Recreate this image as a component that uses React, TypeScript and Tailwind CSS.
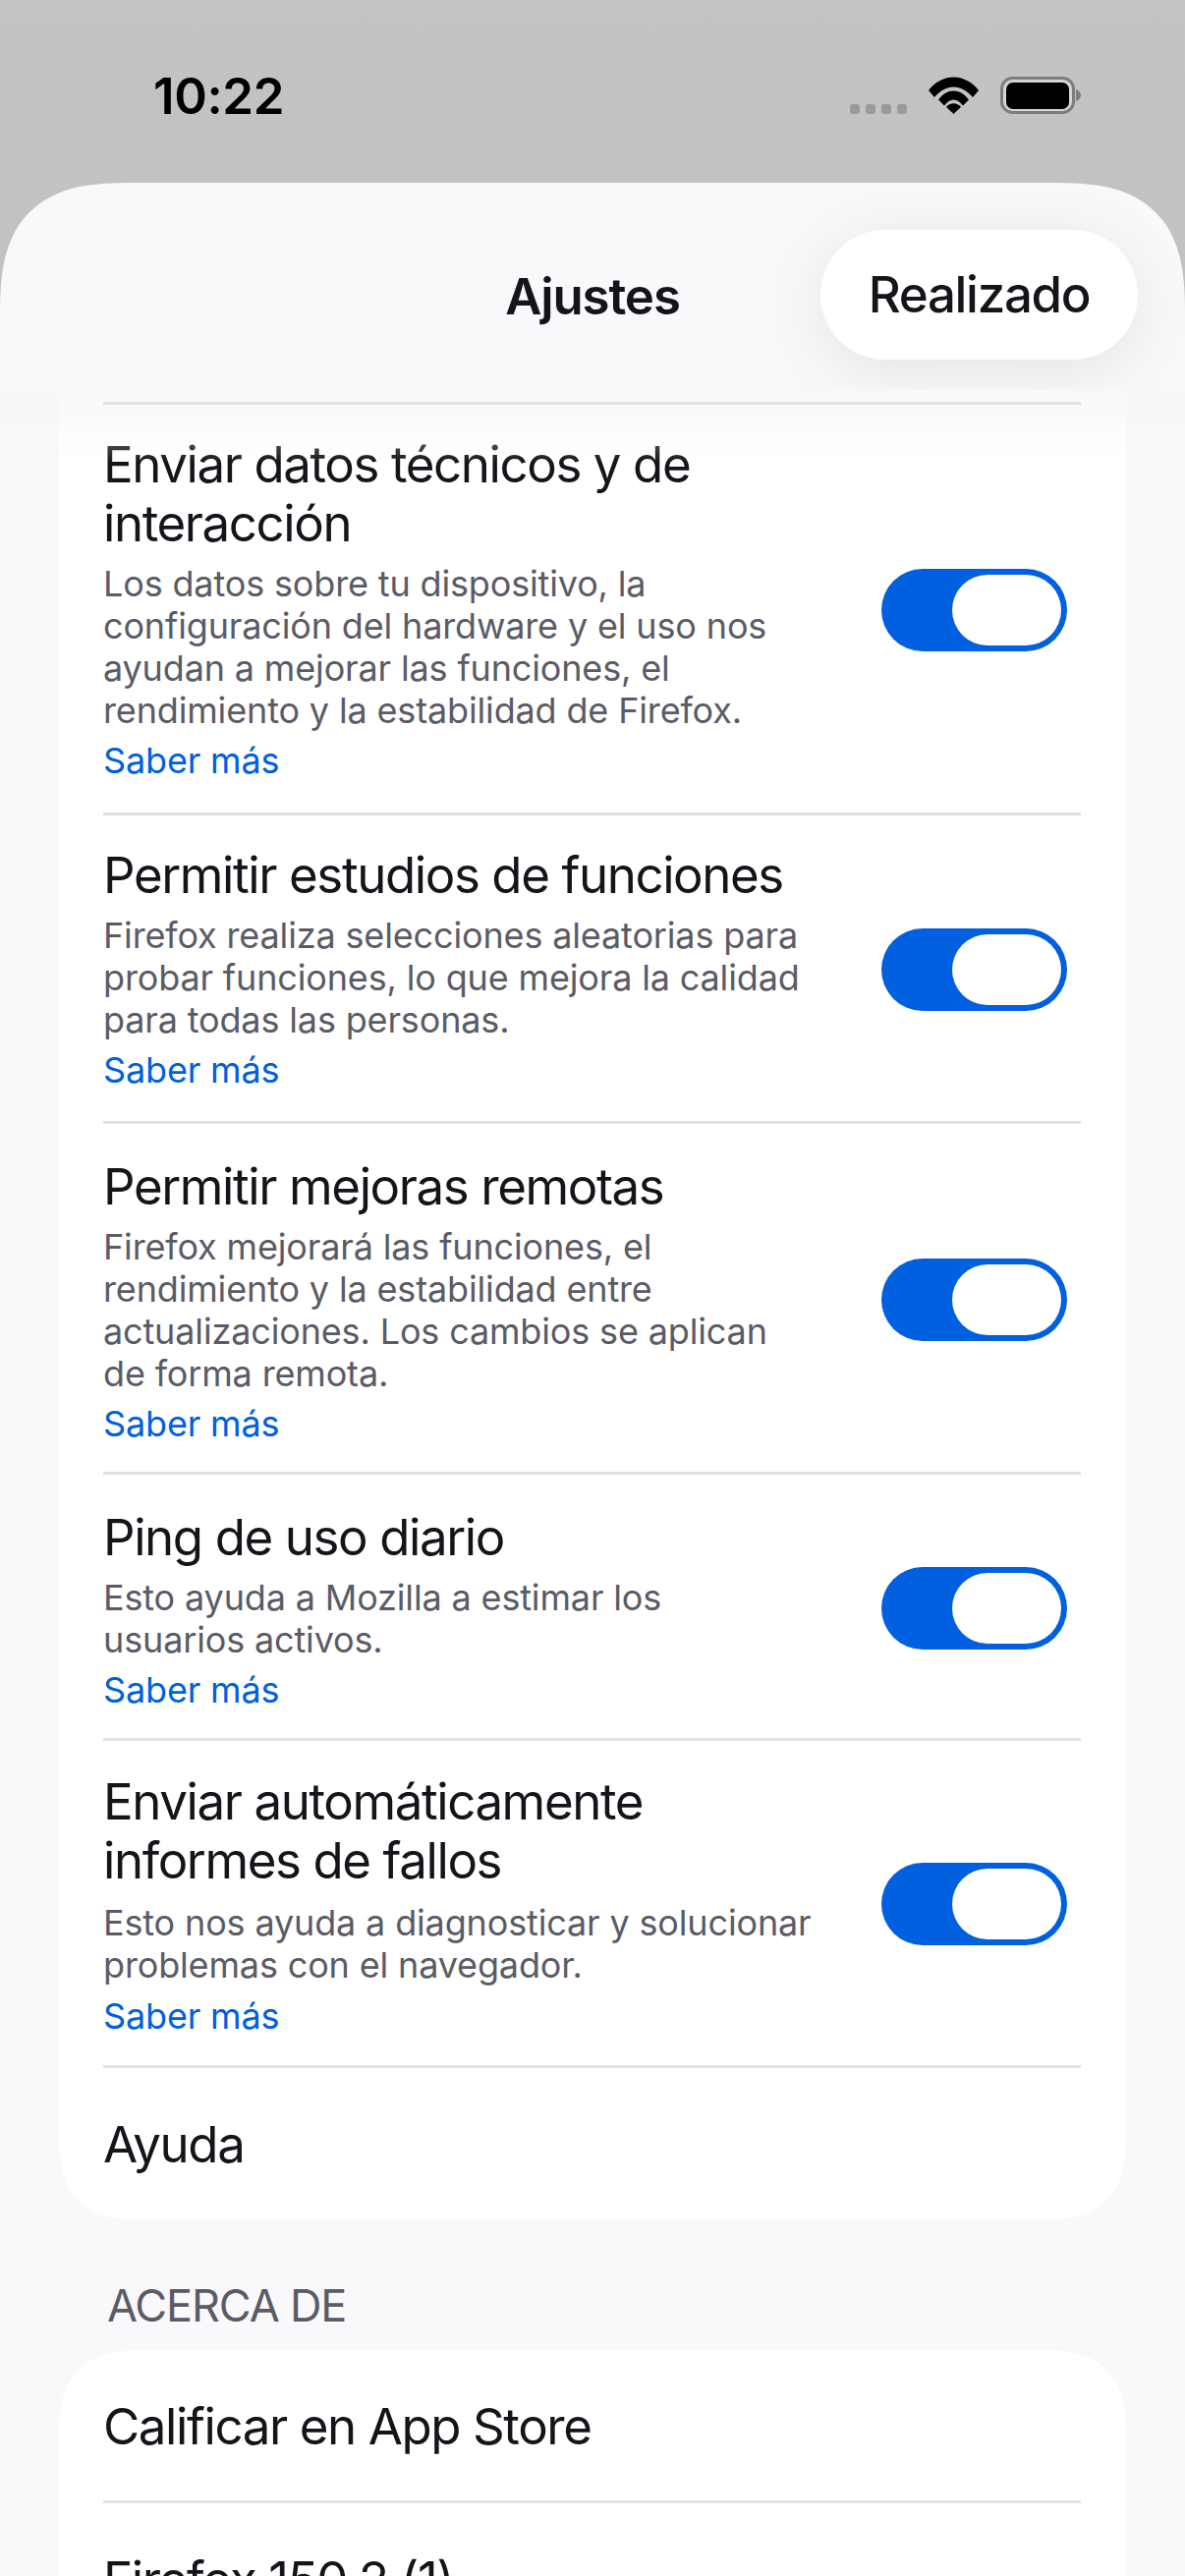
import React from "react";

function Toggle({ cls = "mt-[3px]" }: { cls?: string }) {
  return (
    <div className={`${cls} flex h-[84px] w-[189px] shrink-0 items-center justify-end rounded-full bg-[#0060df] pr-[6px]`}>
      <div className="h-[72px] w-[111px] rounded-full bg-white" />
    </div>
  );
}

function Divider() {
  return <div className="relative z-20 ml-[45px] mr-[46px] h-[3px] bg-[#e0e0e6]" />;
}

function Row({
  title,
  desc,
  h,
  shift = "",
  descGap = "mt-[10px]",
  linkGap = "mt-[8px]",
  toggle,
}: {
  title: string[];
  desc: string[];
  h: string;
  shift?: string;
  descGap?: string;
  linkGap?: string;
  toggle?: string;
}) {
  return (
    <div className={`flex items-center justify-between pl-[45px] pr-[60px] ${h}`}>
      <div className={shift}>
        <div className="text-[51px] leading-[60px] tracking-[-1.4px] text-[#15141a]">
          {title.map((t) => (
            <div key={t}>{t}</div>
          ))}
        </div>
        <div className={`${descGap} text-[36px] leading-[43px] tracking-[-0.15px] text-[#5b5b66]`}>
          {desc.map((t) => (
            <div key={t}>{t}</div>
          ))}
        </div>
        <div className={`${linkGap} text-[36px] leading-[43px] tracking-[-0.15px] text-[#0060df]`}>Saber más</div>
      </div>
      <Toggle cls={toggle} />
    </div>
  );
}

export default function App() {
  return (
    <div
      className="relative h-[2622px] w-[1206px] overflow-hidden bg-gradient-to-b from-[#c3c3c5] to-[#b9b9bb]"
      style={{ fontFamily: 'Inter, "Noto Sans", sans-serif' }}
    >
      <div className="flex h-[186px] items-start justify-between pl-[156px] pr-[106px] pt-[68px]">
        <div className="text-[51px] font-semibold leading-[60px] tracking-[-0.4px] text-black">10:22</div>
        <div className="mt-[10px] flex items-end">
          <div className="flex gap-[6px]">
            {[0, 1, 2, 3].map((i) => (
              <div key={i} className="h-[10px] w-[10px] rounded-[3px] bg-[#9a9a9c]" />
            ))}
          </div>
          <svg className="ml-[22px]" width="51" height="38" viewBox="0 0 51 38">
            <path d="M0 14 C14 -4 37 -4 51 14 L45 21 C33 7 18 7 6 21 Z" fill="#000" />
            <path d="M10 25 C19 13 32 13 41 25 L35 31 C29 23 22 23 16 31 Z" fill="#000" transform="translate(0 -1.5)" />
            <path d="M18 31 C22 26 29 26 33 31 L25.5 38 Z" fill="#000" />
          </svg>
          <svg className="ml-[22px]" width="82" height="38" viewBox="0 0 82 38">
            <rect x="1.5" y="1.5" width="73" height="35" rx="11" fill="#d5d5d7" stroke="#7d7d7f" strokeWidth="3" />
            <rect x="6" y="6" width="64" height="27" rx="7" fill="#000" />
            <path d="M77 13 C80 14 82 16 82 19 C82 22 80 24 77 25 Z" fill="#7d7d7f" />
          </svg>
        </div>
      </div>

      <div className="relative h-[2436px] rounded-t-[135px] bg-[#f9f9fb] [corner-shape:superellipse(1.46)]">
        <div className="relative flex h-[210px] items-center justify-center overflow-hidden rounded-t-[135px] [corner-shape:superellipse(1.46)]">
          <div className="mt-[21px] text-[51px] font-[560] leading-[60px] tracking-[-1.1px] text-[#15141a]">Ajustes</div>
          <div className="absolute left-[835px] top-[48px] z-10 flex h-[132px] w-[323px] items-center justify-center rounded-[66px] bg-white text-[51px] font-medium leading-[60px] tracking-[-1.3px] text-[#15141a] shadow-[0_12px_70px_rgba(0,0,0,0.09)]">
            Realizado
          </div>
        </div>

        <div className="absolute left-0 right-0 top-[210px] z-10 h-[75px] bg-gradient-to-b from-[#f7f7f9e6] to-[#f9f9fb00]" />

        <div className="mx-[60px] rounded-b-[90px] bg-white pt-[13px] [corner-shape:superellipse(1.46)]">
          <Divider />
          <Row
            h="h-[415px]"
            title={["Enviar datos técnicos y de", "interacción"]}
            desc={[
              "Los datos sobre tu dispositivo, la",
              "configuración del hardware y el uso nos",
              "ayudan a mejorar las funciones, el",
              "rendimiento y la estabilidad de Firefox.",
            ]}
          />
          <Divider />
          <Row
            h="h-[311px]"
            title={["Permitir estudios de funciones"]}
            desc={[
              "Firefox realiza selecciones aleatorias para",
              "probar funciones, lo que mejora la calidad",
              "para todas las personas.",
            ]}
          />
          <Divider />
          <Row
            h="h-[354px]"
            shift="mt-[6px]"
            title={["Permitir mejoras remotas"]}
            desc={[
              "Firefox mejorará las funciones, el",
              "rendimiento y la estabilidad entre",
              "actualizaciones. Los cambios se aplican",
              "de forma remota.",
            ]}
          />
          <Divider />
          <Row
            h="h-[268px]"
            shift="mt-[6px]"
            title={["Ping de uso diario"]}
            desc={["Esto ayuda a Mozilla a estimar los", "usuarios activos."]}
          />
          <Divider />
          <Row
            h="h-[330px]"
            shift="mt-[3px]"
            descGap="mt-[12px]"
            linkGap="mt-[9px]"
            toggle="mt-[1px]"
            title={["Enviar automáticamente", "informes de fallos"]}
            desc={["Esto nos ayuda a diagnosticar y solucionar", "problemas con el navegador."]}
          />
          <Divider />
          <div className="flex h-[155px] items-center pl-[45px] text-[51px] leading-[60px] tracking-[-1.4px] text-[#15141a]">Ayuda</div>
        </div>

        <div className="ml-[109px] mt-[60px] text-[45px] leading-[54px] tracking-[-1.15px] text-[#5b5b66]">ACERCA DE</div>
        <div className="mx-[60px] mt-[18px] rounded-t-[90px] bg-white [corner-shape:superellipse(1.46)]">
          <div className="flex h-[153px] items-center pl-[45px] pt-[3px] text-[51px] leading-[60px] tracking-[-1.4px] text-[#15141a]">Calificar en App Store</div>
          <Divider />
          <div className="flex h-[153px] items-center pl-[45px] pt-[3px] text-[51px] leading-[60px] tracking-[-1.4px] text-[#15141a]">Firefox 150.2 (1)</div>
        </div>
      </div>
    </div>
  );
}
